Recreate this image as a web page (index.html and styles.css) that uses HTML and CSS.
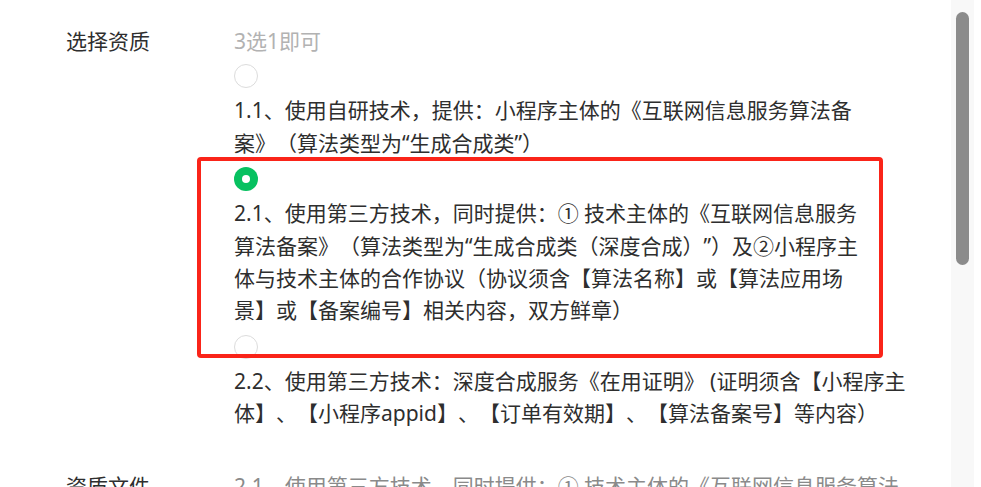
FILE: index.html
```html
<!DOCTYPE html>
<html lang="zh-CN">
<head>
<meta charset="utf-8">
<title>选择资质</title>
<link rel="stylesheet" href="styles.css">
</head>
<body>
<div class="page">
  <main class="content">
    <div class="form-row">
      <div class="label">选择资质</div>
      <div class="value">
        <div class="hint">3选1即可</div>
        <div class="option">
          <span class="radio"></span>
          <div class="option-text">1.1、使用自研技术，提供：小程序主体的《互联网信息服务算法备<br>案》（算法类型为“生成合成类”）</div>
        </div>
        <div class="option">
          <span class="radio checked"></span>
          <div class="option-text">2.1、使用第三方技术，同时提供：① 技术主体的《互联网信息服务<br>算法备案》（算法类型为“生成合成类（深度合成）”）及②小程序主<br>体与技术主体的合作协议（协议须含【算法名称】或【算法应用场<br>景】或【备案编号】相关内容，双方鲜章）</div>
        </div>
        <div class="option">
          <span class="radio"></span>
          <div class="option-text">2.2、使用第三方技术：深度合成服务《在用证明》 (证明须含【小程序主<br>体】、【小程序appid】、【订单有效期】、【算法备案号】等内容）</div>
        </div>
      </div>
    </div>
    <div class="form-row second">
      <div class="label">资质文件</div>
      <div class="value muted">2.1、使用第三方技术，同时提供：① 技术主体的《互联网信息服务算法<br>备案》</div>
    </div>
    <div class="highlight"></div>
  </main>
  <div class="scrollbar"><div class="thumb"></div></div>
</div>
</body>
</html>
```

FILE: styles.css
```css
html, body {
  margin: 0;
  padding: 0;
  background: #ffffff;
  height: 100%;
  overflow: hidden;
}

body {
  font-family: "Noto Sans", "Noto Sans CJK SC", sans-serif;
  font-size: 21px;
  line-height: 32.4px;
  color: #2e2e2e;
  text-spacing-trim: space-all;
}

.page {
  display: flex;
  height: 487px;
}

.content {
  position: relative;
  flex: 1;
  padding: 25px 0 0 66px;
}

.form-row {
  display: grid;
  grid-template-columns: 168px 1fr;
}

.form-row.second {
  margin-top: 32px;
}

.label {
  color: #2e2e2e;
}

.hint {
  color: #b2b2b2;
  margin-bottom: 7px;
}

.muted {
  color: #8a8a8a;
}

.option {
  display: flex;
  flex-direction: column;
  align-items: flex-start;
  gap: 6px;
  margin-bottom: 8px;
}

.option-text {
  white-space: nowrap;
}

.radio {
  box-sizing: border-box;
  width: 24px;
  height: 24px;
  border-radius: 50%;
  border: 1px solid #dcdcdc;
  background: #ffffff;
  display: flex;
  align-items: center;
  justify-content: center;
}

.radio.checked {
  border: none;
  background: #07c160;
}

.radio.checked::after {
  content: "";
  width: 8px;
  height: 8px;
  border-radius: 50%;
  background: #ffffff;
}

.highlight {
  position: absolute;
  left: 197px;
  top: 157px;
  width: 686px;
  height: 201px;
  box-sizing: border-box;
  border: 4px solid #fa2419;
  border-radius: 4px;
  pointer-events: none;
}

.scrollbar {
  width: 23px;
  margin-right: 7px;
  background: #f8f8f8;
  box-sizing: border-box;
  padding: 12px 5px 0 5px;
}

.thumb {
  height: 253px;
  border-radius: 7px;
  background: #8b8b8b;
}
```
